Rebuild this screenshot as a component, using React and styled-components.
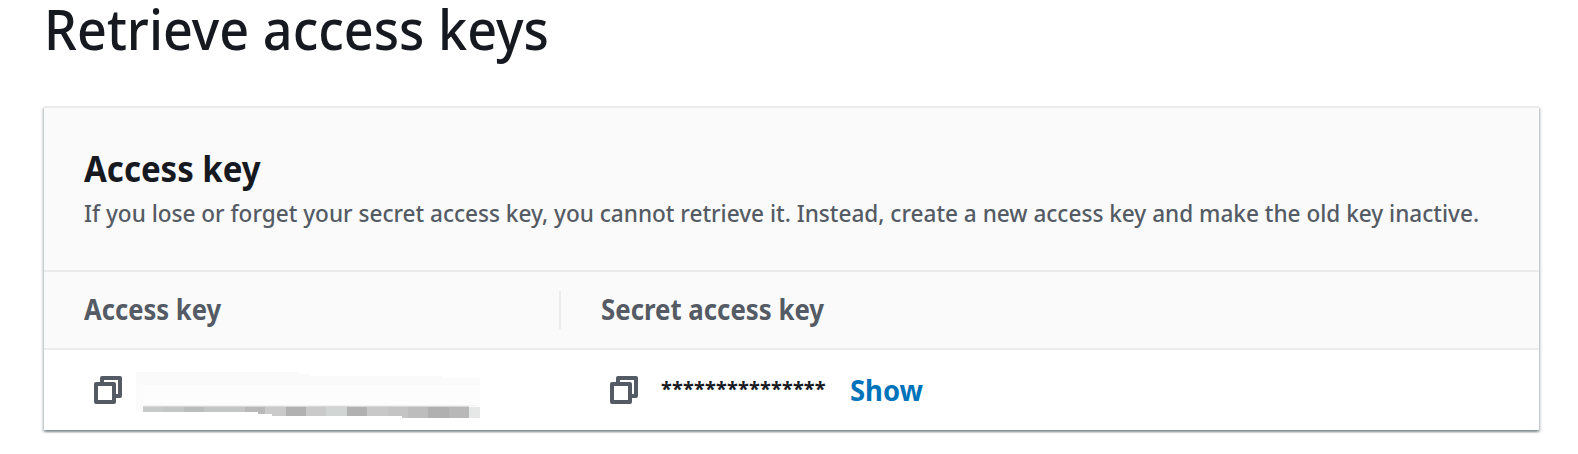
import React from 'react';
import styled, { createGlobalStyle } from 'styled-components';

const GlobalStyle = createGlobalStyle`
  * { box-sizing: border-box; }
  body {
    margin: 0;
    background: #fff;
    color: #16191f;
    font-family: "Noto Sans", "Open Sans", sans-serif;
    overflow: hidden;
  }
  h1, h2, p { margin: 0; }
`;

const Page = styled.main`
  height: 454px;
  padding: 0 39px 0 44px;
`;

const Condensed = styled.span`
  display: inline-block;
  white-space: nowrap;
  transform: scaleX(${(p) => p.$ratio});
  transform-origin: left center;
`;

const Title = styled.h1`
  height: 106px;
  font-size: 56px;
  line-height: 56px;
  font-weight: 500;
`;

const Panel = styled.section`
  height: 324px;
  background: #fff;
  border-top: 2px solid #ebebeb;
  box-shadow:
    0 2px 2px 0 rgba(0, 28, 36, 0.3),
    2px 2px 2px 0 rgba(0, 28, 36, 0.15),
    -2px 2px 2px 0 rgba(0, 28, 36, 0.15);
`;

const PanelHeader = styled.header`
  height: 164px;
  padding: 39px 40px 0;
  background: #fafafa;
  border-bottom: 2px solid #ebebeb;
`;

const PanelTitle = styled.h2`
  height: 44px;
  font-size: 36px;
  line-height: 44px;
  font-weight: 700;
`;

const Description = styled.p`
  font-size: 24px;
  line-height: 44px;
  color: #545b64;
  font-weight: 500;
`;

const Columns = styled.div`
  display: grid;
  grid-template-columns: 517px 1fr;
  align-items: center;
`;

const HeadRow = styled(Columns)`
  height: 78px;
  background: #fafafa;
  border-bottom: 2px solid #ebebeb;
`;

const HeadCell = styled.div`
  height: 38px;
  padding-left: 40px;
  font-size: 28px;
  line-height: 37px;
  font-weight: 700;
  color: #545b64;
  border-right: ${(p) => (p.$divided ? '2px solid #ebebeb' : '0')};
`;

const BodyRow = styled(Columns)`
  height: 80px;
`;

const BodyCell = styled.div`
  display: flex;
  align-items: center;
  height: 80px;
  padding-left: ${(p) => p.$inset}px;
`;

const CopyIcon = styled.svg`
  flex: none;
  width: 28px;
  height: 28px;
  fill: none;
  stroke: #545b64;
  stroke-width: 4;
  stroke-linejoin: round;
`;

const Mask = styled.span`
  width: 189px;
  height: 32px;
  margin-left: 23px;
  font-size: 20px;
  line-height: 30px;
  font-weight: 700;
  letter-spacing: 0.15px;
`;

const ShowLink = styled.a`
  height: 38px;
  font-size: 28px;
  line-height: 38px;
  font-weight: 700;
  color: #0073bb;
`;

const Redaction = styled.svg`
  flex: none;
  width: 344px;
  height: 46px;
  margin: 10px 0 0 14px;
`;

const Copy = () => (
  <CopyIcon viewBox="0 0 28 28" aria-label="Copy">
    <path d="M8 8V2H26V20H20" />
    <path d="M2 8H20V26H2Z" />
  </CopyIcon>
);

const smudges = [
  [7, 20, '#c8c9c9'], [27, 21, '#c4c5c5'], [48, 20, '#bbbdbc'], [68, 21, '#c4c6c5'],
  [89, 20, '#c4c6c5'], [109, 20, '#b9b9b9'], [129, 21, '#cacaca'], [150, 20, '#b1b1b1'],
  [170, 20, '#cacaca'], [190, 21, '#d1d5d3'], [211, 20, '#b1b1b1'], [231, 21, '#c8c8c8'],
  [252, 20, '#c4c4c4'], [272, 20, '#bdbdbd'], [292, 21, '#b0b0b0'], [313, 20, '#b8b8b8'],
  [333, 11, '#e5e8e7'],
];

const OUTLINE = 'M0 0H162V2H174V4H306V6H344V46H266V44H136V42H122V40H0Z';

const HiddenKey = () => (
  <Redaction viewBox="0 0 344 46" shapeRendering="crispEdges">
    <clipPath id="outline"><path d={OUTLINE} /></clipPath>
    <g clipPath="url(#outline)">
      <rect width="344" height="46" fill="#fdfdfd" />
      <rect width="344" height="13" fill="#fafafa" />
      <rect y="13" width="7" height="33" fill="#fbfbfb" />
      <rect y="33" width="333" x="7" height="1" fill="#f2f2f2" />
      <rect y="34" width="326" x="7" height="2" fill="#d8d8d8" />
      {smudges.map(([x, w, fill]) => (
        <rect key={x} x={x} y="35" width={w} height="11" fill={fill} />
      ))}
    </g>
  </Redaction>
);

export default function App() {
  return (
    <>
      <GlobalStyle />
      <Page>
        <Title><Condensed $ratio={0.931}>Retrieve access keys</Condensed></Title>
        <Panel>
          <PanelHeader>
            <PanelTitle><Condensed $ratio={0.917}>Access key</Condensed></PanelTitle>
            <Description>
              <Condensed $ratio={0.9405}>
                If you lose or forget your secret access key, you cannot retrieve it. Instead, create a new access key and make the old key inactive.
              </Condensed>
            </Description>
          </PanelHeader>
          <HeadRow>
            <HeadCell $divided><Condensed $ratio={0.915}>Access key</Condensed></HeadCell>
            <HeadCell><Condensed $ratio={0.922}>Secret access key</Condensed></HeadCell>
          </HeadRow>
          <BodyRow>
            <BodyCell $inset={50}>
              <Copy />
              <HiddenKey />
            </BodyCell>
            <BodyCell $inset={49}>
              <Copy />
              <Mask>***************</Mask>
              <ShowLink><Condensed $ratio={0.98}>Show</Condensed></ShowLink>
            </BodyCell>
          </BodyRow>
        </Panel>
      </Page>
    </>
  );
}
